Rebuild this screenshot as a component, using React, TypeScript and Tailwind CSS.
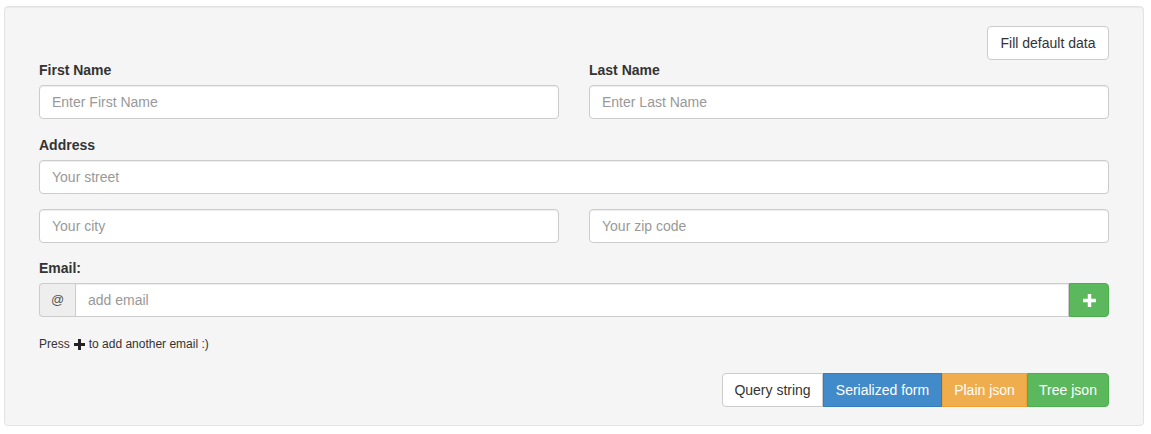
import React from 'react';

const inputCls =
  'block w-full h-[34px] px-3 text-[14px] text-[#555] bg-white border border-[#ccc] rounded-[4px] shadow-[inset_0_1px_1px_rgba(0,0,0,0.075)] placeholder:text-[#999] outline-none';

const labelCls = 'block h-5 mb-[5px] text-[14px] leading-5 font-bold text-[#333]';

const PlusGlyph = ({ size = 12, className = '' }: { size?: number; className?: string }) => (
  <svg width={size} height={size} viewBox="0 0 12 12" className={className} fill="currentColor">
    <path d="M4.4 0h3.2v4.4H12v3.2H7.6V12H4.4V7.6H0V4.4h4.4z" />
  </svg>
);

export default function App() {
  return (
    <div className="pt-[6px] pl-[4px] font-['Liberation_Sans',Arial,sans-serif] text-[#333]">
      <div className="w-[1140px] h-[420px] bg-[#f5f5f5] border border-[#e3e3e3] rounded-[4px] shadow-[inset_0_1px_1px_rgba(0,0,0,0.05)] pt-[19px] px-[34px]">
        {/* Top action */}
        <div className="flex justify-end">
          <button className="h-[34px] w-[122px] text-[14px] text-[#333] bg-white border border-[#ccc] rounded-[4px]">
            Fill default data
          </button>
        </div>

        {/* Name row */}
        <div className="grid grid-cols-2 gap-[30px]">
          <div>
            <label className={labelCls}>First Name</label>
            <input className={inputCls} placeholder="Enter First Name" />
          </div>
          <div>
            <label className={labelCls}>Last Name</label>
            <input className={inputCls} placeholder="Enter Last Name" />
          </div>
        </div>

        {/* Address */}
        <div className="mt-4">
          <label className={labelCls}>Address</label>
          <input className={inputCls} placeholder="Your street" />
          <div className="grid grid-cols-2 gap-[30px] mt-[15px]">
            <input className={inputCls} placeholder="Your city" />
            <input className={inputCls} placeholder="Your zip code" />
          </div>
        </div>

        {/* Email */}
        <div className="mt-[15px]">
          <label className={labelCls}>Email:</label>
          <div className="flex h-[34px]">
            <span className="flex items-center justify-center w-[36px] text-[13px] text-[#555] bg-[#eee] border border-[#ccc] border-r-0 rounded-l-[4px]">
              @
            </span>
            <input
              className="flex-1 min-w-0 h-[34px] px-3 text-[14px] text-[#555] bg-white border border-[#ccc] shadow-[inset_0_1px_1px_rgba(0,0,0,0.075)] placeholder:text-[#999] outline-none"
              placeholder="add email"
            />
            <button className="flex items-center justify-center w-[40px] h-[34px] bg-[#5cb85c] border border-[#4cae4c] rounded-r-[4px] text-white">
              <PlusGlyph size={13} />
            </button>
          </div>
        </div>

        <p className="mt-[19px] flex items-center text-[12px] leading-[17px] text-[#333]">
          Press
          <PlusGlyph size={11} className="mx-[4px] text-[#222]" />
          to add another email :)
        </p>

        {/* Output type switch */}
        <div className="flex justify-end mt-[20px]">
          <div className="flex text-[14px]">
            <button className="h-[34px] w-[101px] bg-white text-[#333] border border-[#ccc] rounded-l-[4px]">
              Query string
            </button>
            <button className="h-[34px] w-[119px] bg-[#428bca] text-white border border-[#357ebd]">
              Serialized form
            </button>
            <button className="h-[34px] w-[85px] bg-[#f0ad4e] text-white border border-[#eea236]">
              Plain json
            </button>
            <button className="h-[34px] w-[82px] bg-[#5cb85c] text-white border border-[#4cae4c] rounded-r-[4px]">
              Tree json
            </button>
          </div>
        </div>
      </div>
    </div>
  );
}
